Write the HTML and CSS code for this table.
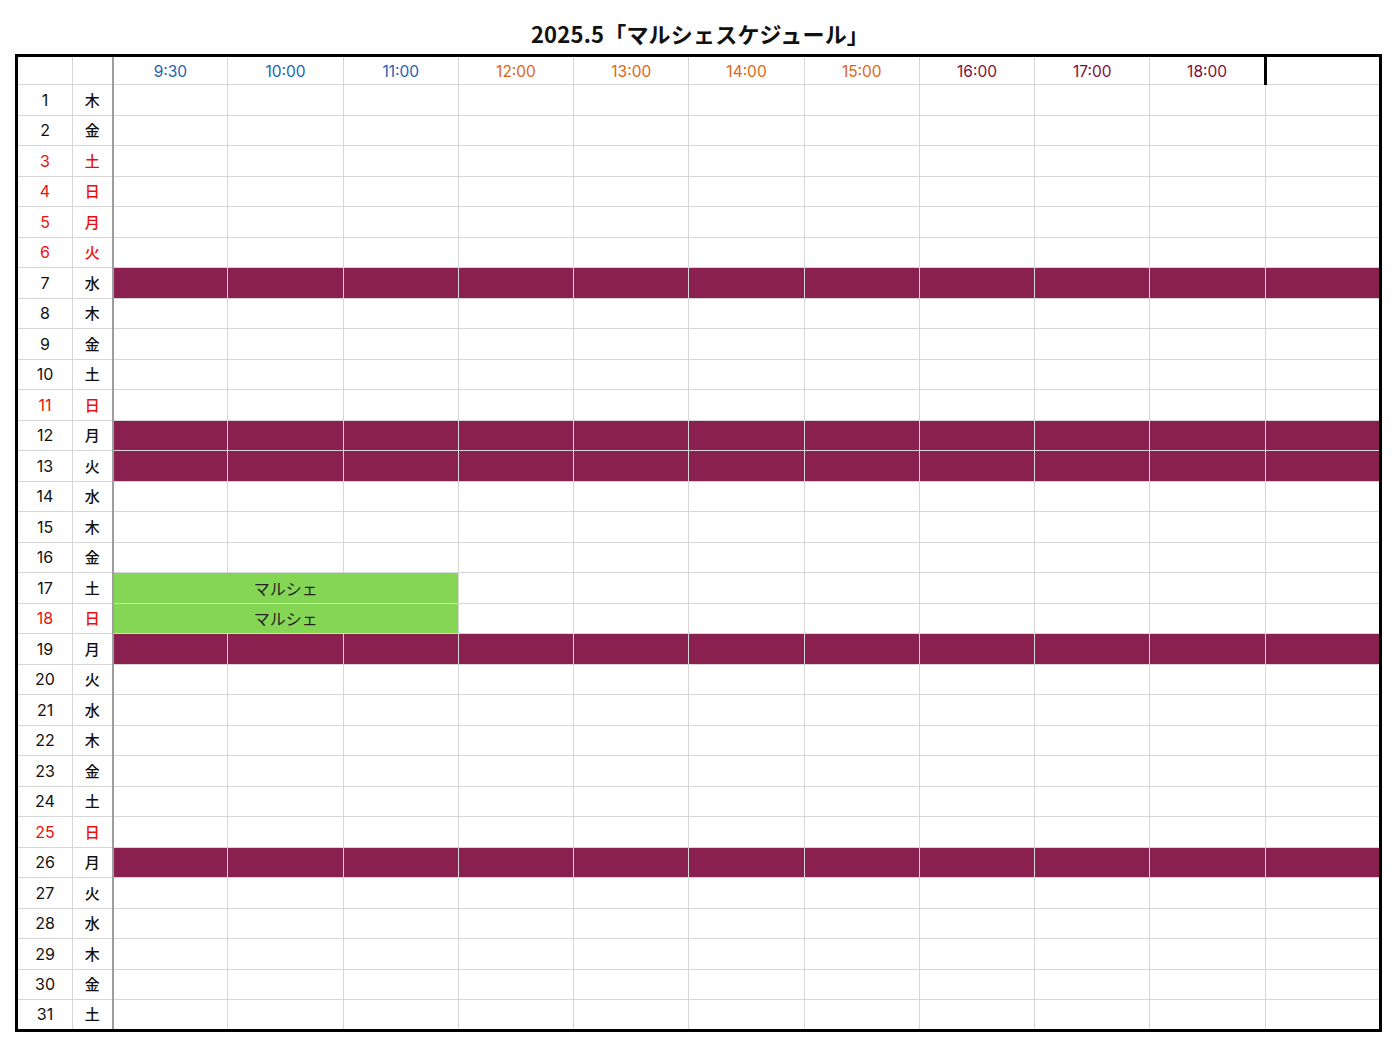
FILE: index.html
```html
<!DOCTYPE html>
<html lang="ja">
<head>
<meta charset="utf-8">
<title>2025.5「マルシェスケジュール」</title>
<link rel="stylesheet" href="styles.css">
</head>
<body>
<h1 class="title">2025.5「マルシェスケジュール」</h1>
<table class="sched">
<colgroup>
<col class="c-day"><col class="c-wd">
<col class="c-t"><col class="c-t"><col class="c-t"><col class="c-t"><col class="c-t"><col class="c-t"><col class="c-t"><col class="c-t"><col class="c-t"><col class="c-t"><col class="c-t">
</colgroup>
<thead>
<tr class="head">
<th></th><th class="wd"></th>
<th class="blue">9:30</th><th class="blue">10:00</th><th class="blue">11:00</th>
<th class="orange">12:00</th><th class="orange">13:00</th><th class="orange">14:00</th><th class="orange">15:00</th>
<th class="wine">16:00</th><th class="wine">17:00</th><th class="wine">18:00</th><th class="edge"></th>
</tr>
</thead>
<tbody id="body"></tbody>
</table>
<script src="app.js"></script>
</body>
</html>
```
FILE: app.js
```js
const wd = ["木","金","土","日","月","火","水"];
const red = [3,4,5,6,11,18,25];
const closed = [7,12,13,19,26];
const marche = [17,18];
const body = document.getElementById("body");
let html = "";
for (let d = 1; d <= 31; d++) {
  const w = wd[(d - 1) % 7];
  const cls = red.includes(d) ? " red" : "";
  let row = `<tr><td class="day${cls}">${d}</td><td class="wd${cls}">${w}</td>`;
  if (closed.includes(d)) {
    for (let i = 0; i < 11; i++) row += `<td class="closed"></td>`;
  } else if (marche.includes(d)) {
    row += `<td class="marche" colspan="3">マルシェ</td>`;
    for (let i = 0; i < 8; i++) row += `<td></td>`;
  } else {
    for (let i = 0; i < 11; i++) row += `<td></td>`;
  }
  row += `</tr>`;
  html += row;
}
body.innerHTML = html;
```
FILE: styles.css
```css
html, body {
  margin: 0;
  padding: 0;
  background: #ffffff;
}
body {
  font-family: "Inter", "Noto Sans CJK JP", sans-serif;
  color: #111;
}
.title {
  margin: 0;
  padding-top: 18px;
  height: 36px;
  font-family: "Noto Sans CJK JP", sans-serif;
  font-size: 22px;
  font-weight: 600;
  line-height: 30px;
  text-align: center;
  letter-spacing: 0.2px;
}
.sched {
  margin-left: 15px;
  width: 1367px;
  table-layout: fixed;
  border-collapse: collapse;
  border: 3px solid #000;
}
.c-day { width: 56px; }
.c-wd { width: 40px; }
.c-t { width: 115.2px; }
.sched th, .sched td {
  border: 1px solid #d6d6d6;
  padding: 0;
  text-align: center;
  font-size: 16px;
  font-weight: 400;
  line-height: 20px;
}
.head th { height: 25px; font-size: 15.5px; padding-top: 2px; }
.sched tbody tr { height: 30.5px; }
.sched .wd {
  border-right: 2px solid #9e9e9e;
  font-family: "Noto Sans CJK JP", sans-serif;
  font-size: 15px;
  font-weight: 500;
}
.blue { color: #1c5fb3; }
.orange { color: #e2640f; }
.wine { color: #7e0b37; }
.head .edge { border-left: 3px solid #000; }
.red { color: #e8100c; }
.sched .day.red, .sched .wd.red { color: #e8100c; }
.closed { background: #8a2050; border-color: #b07a92; }
.marche {
  background: #86d655;
  border-color: #b5c9a8;
  font-family: "Noto Sans CJK JP", sans-serif;
  font-size: 14.5px;
  color: #222;
}
```
